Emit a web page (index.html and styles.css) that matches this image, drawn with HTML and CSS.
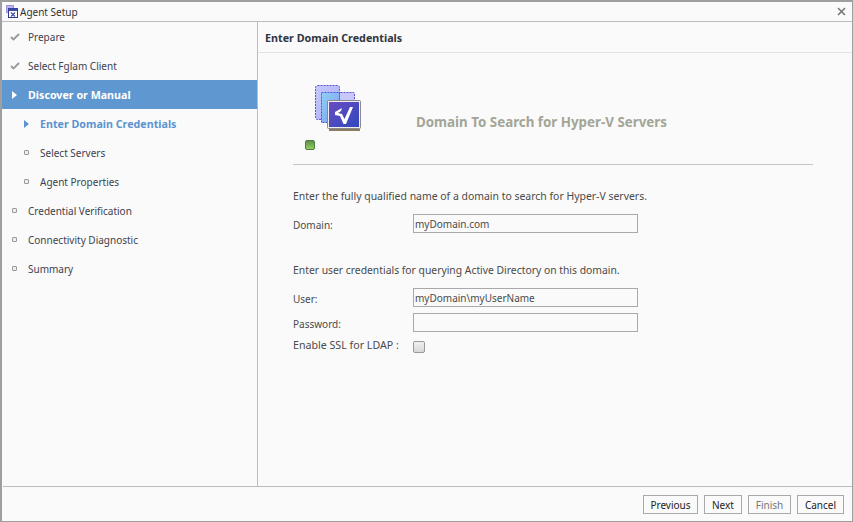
FILE: index.html
```html
<!DOCTYPE html>
<html lang="en">
<head>
<meta charset="utf-8">
<title>Agent Setup</title>
<link rel="stylesheet" href="styles.css">
</head>
<body>
<div class="window">
  <header class="titlebar">
    <svg class="app-icon" width="12" height="13" viewBox="0 0 12 13">
      <rect x="0.5" y="0.5" width="7" height="7" fill="#b9b6ef" stroke="#5a50b8" stroke-dasharray="1 1"/>
      <rect x="2.5" y="3.5" width="9" height="9" fill="#fff" stroke="#2f3a8c"/>
      <rect x="2.5" y="3.5" width="9" height="2.5" fill="#3d4aa8"/>
      <path d="M5 7.500l4 4M9 7.500l-4 4" stroke="#3d4aa8" stroke-width="1.100"/>
    </svg>
    <span class="title-text">Agent Setup</span>
    <svg class="close" width="9" height="9" viewBox="0 0 9 9"><path d="M1 1l7 7M8 1l-7 7" stroke="#777" stroke-width="1.6"/></svg>
  </header>
  <div class="body">
    <nav class="sidebar">
      <div class="step"><svg class="mark" width="10" height="8" viewBox="0 0 10 8"><path d="M1 4l2.5 2.500L9 1" fill="none" stroke="#999" stroke-width="1.8"/></svg>Prepare</div>
      <div class="step"><svg class="mark" width="10" height="8" viewBox="0 0 10 8"><path d="M1 4l2.5 2.500L9 1" fill="none" stroke="#999" stroke-width="1.8"/></svg>Select Fglam Client</div>
      <div class="step active"><span class="tri tri-white"></span>Discover or Manual</div>
      <div class="step sub current"><span class="tri tri-blue"></span>Enter Domain Credentials</div>
      <div class="step sub"><span class="dot"></span>Select Servers</div>
      <div class="step sub"><span class="dot"></span>Agent Properties</div>
      <div class="step"><span class="dot"></span>Credential Verification</div>
      <div class="step"><span class="dot"></span>Connectivity Diagnostic</div>
      <div class="step"><span class="dot"></span>Summary</div>
    </nav>
    <main class="panel">
      <h1 class="panel-title">Enter Domain Credentials</h1>
      <div class="content">
        <div class="banner">
          <div class="logo-col">
            <svg class="logo" width="48" height="48" viewBox="0 0 48 48">
              <defs>
                <linearGradient id="scr" x1="0" y1="0" x2="1" y2="1"><stop offset="0" stop-color="#6a4cc0"/><stop offset="1" stop-color="#2f49bd"/></linearGradient>
                <linearGradient id="bk" x1="0" y1="0" x2="1" y2="1"><stop offset="0" stop-color="#c6c8fb"/><stop offset="1" stop-color="#a9b0f5"/></linearGradient>
                <linearGradient id="mid" x1="0" y1="0" x2="1" y2="1"><stop offset="0" stop-color="#8fd0f8"/><stop offset="1" stop-color="#7f9cf0"/></linearGradient>
              </defs>
              <rect x="1.500" y="1.500" width="24" height="34" rx="2" fill="url(#bk)" stroke="#5b50d0" stroke-dasharray="2 1"/>
              <rect x="25.500" y="8.500" width="15" height="20" rx="1" fill="#c8c8f8" stroke="#5b50d0" stroke-dasharray="2 1"/>
              <rect x="7.500" y="8.500" width="18" height="30" fill="url(#mid)" stroke="#5b50d0" stroke-dasharray="2 1"/>
              <rect x="13.500" y="16.500" width="33" height="28" rx="1" fill="#efefef" stroke="#8a8a8a"/>
              <rect x="15" y="18" width="30" height="25" fill="url(#scr)"/>
              <rect x="15" y="45" width="31" height="2" fill="#8a7a60"/>
              <path d="M21 28L28 24L27 27L24 29L28 30L30.500 35L36 23H39L32 40H29.500L26 32L21 31Z" fill="#fff"/>
            </svg>
            <span class="led"></span>
          </div>
          <h2 class="banner-title">Domain To Search for Hyper-V Servers</h2>
        </div>
        <p class="intro intro-first">Enter the fully qualified name of a domain to search for Hyper-V servers.</p>
        <div class="field field-domain"><label class="label">Domain:</label><input class="input" value="myDomain.com"></div>
        <p class="intro intro-second">Enter user credentials for querying Active Directory on this domain.</p>
        <div class="field field-user"><label class="label">User:</label><input class="input" value="myDomain\myUserName"></div>
        <div class="field field-tight"><label class="label">Password:</label><input class="input"></div>
        <div class="field field-check"><label class="label label-check">Enable SSL for LDAP :</label><span class="check"></span></div>
      </div>
    </main>
  </div>
  <footer class="footer">
    <button class="btn btn-prev">Previous</button>
    <button class="btn btn-next">Next</button>
    <button class="btn btn-finish disabled">Finish</button>
    <button class="btn btn-cancel">Cancel</button>
  </footer>
</div>
</body>
</html>
```
FILE: styles.css
```css
* { box-sizing: border-box; }
html, body { margin: 0; height: 100%; }
body { font-family: "Noto Sans", "DejaVu Sans", sans-serif; font-size: 10px; color: #333; background: #fafafa; }
.window { width: 853px; height: 522px; display: flex; flex-direction: column; background: #fafafa; border: 2px solid #9f9f9f; border-right-width: 1px; border-bottom-width: 1px; }
.titlebar { height: 20px; flex: none; display: flex; align-items: center; padding-left: 4px; border-bottom: 1px solid #bcbcbc; }
.app-icon { margin-right: 2px; }
.title-text { font-size: 10px; color: #333; }
.close { margin-left: auto; margin-right: 6px; }
.body { flex: 1; display: flex; min-height: 0; }
.sidebar { width: 256px; flex: none; border-right: 1px solid #bcbcbc; }
.step { height: 29px; display: flex; align-items: center; padding-left: 8px; color: #3d4250; }
.step > :first-child { width: 10px; margin-right: 8px; flex: none; }
.step.sub { padding-left: 20px; }
.step.active { background: #5f97d0; color: #fff; font-weight: 700; font-size: 10.700px; }
.step.current { color: #5b93cf; font-weight: 700; font-size: 10.700px; }
.tri { height: 0; width: 0 !important; margin-right: 11px !important; margin-left: 2px; border-style: solid; border-width: 4px 0 4px 5px; border-color: transparent; }
.tri-white { border-left-color: #fff; }
.tri-blue { border-left-color: #5b93cf; }
.dot { height: 5px; width: 5px !important; margin-left: 2px; margin-right: 11px !important; border: 1px solid #9a9a9a; background: #eee; border-radius: 1px; }
.panel { flex: 1; min-width: 0; }
.panel-title { margin: 0; height: 31px; padding: 2px 0 0 7px; display: flex; align-items: center; font-size: 10.750px; font-weight: 700; color: #2f3540; border-bottom: 1px solid #e2e2e2; }
.content { padding: 0 39px 0 35px; }
.banner { height: 112px; display: flex; border-bottom: 1px solid #c4c4c4; }
.logo-col { width: 123px; flex: none; padding: 31px 0 0 9px; position: relative; }
.logo { display: block; margin-left: 12px; }
.led { position: absolute; left: 12px; top: 87px; width: 10px; height: 10px; border: 1px solid #4f7a44; border-radius: 2px; background: linear-gradient(#5d8f4c, #93d15f); }
.banner-title { margin: 60px 0 0; align-self: flex-start; font-size: 13.350px; font-weight: 700; color: #a3a596; }
.intro { margin: 0; font-size: 10.450px; color: #4a4a4a; line-height: 15px; }
.intro-first { margin-top: 24px; }
.intro-second { margin-top: 30px; font-size: 10.350px; }
.field { display: flex; align-items: center; height: 19px; color: #4a4a4a; }
.field-domain { margin-top: 10px; }
.field-user { margin-top: 10px; }
.field-tight { margin-top: 6px; }
.field-check { margin-top: 5px; height: 17px; }
.label { width: 120px; flex: none; padding-top: 2px; }
.label-check { padding-top: 0; padding-bottom: 2px; font-size: 10.650px; }
.input { width: 225px; height: 19px; border: 1px solid #a9a9a9; background: #fafafa; padding: 0 1px; font: inherit; color: #4a4a4a; outline: 0; }
.check { width: 12px; height: 12px; margin-top: 2px; border: 1px solid #9a9a9a; border-radius: 2px; background: linear-gradient(#f0f0f0, #d8d8d8); }
.footer { height: 35px; flex: none; border-top: 1px solid #bcbcbc; margin-left: 1px; display: flex; justify-content: flex-end; align-items: flex-start; gap: 6px; padding: 8px 8px 0 0; }
.btn { height: 19px; padding: 0; border: 1px solid #a9a9a9; background: #fafafa; font: inherit; color: #222; }
.btn-prev { width: 55px; }
.btn-next { width: 38px; }
.btn-finish { width: 43px; }
.btn-cancel { width: 47px; }
.btn.disabled { color: #777; }
```
